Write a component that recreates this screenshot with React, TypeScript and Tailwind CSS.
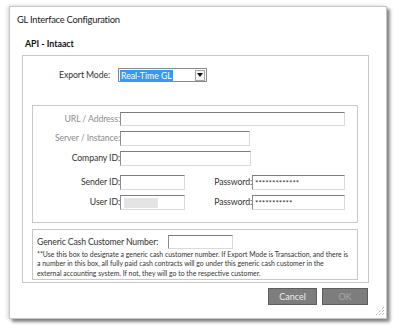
import type { ReactNode } from "react";

const font = { fontFamily: "Lato, 'Liberation Sans', sans-serif" };

function Field({ w, h = "h-[15px]", children }: { w: string; h?: string; children?: ReactNode }) {
  return (
    <div
      className={`${w} ${h} flex items-center border border-t-[#7c7c7c] border-l-[#8c8c8c] border-r-[#dadada] border-b-[#dadada] bg-white pl-[2px] text-[8px] leading-none text-[#333]`}
    >
      {children}
    </div>
  );
}

function Row({ label, muted, children, mt }: { label: string; muted?: boolean; children: ReactNode; mt: string }) {
  return (
    <div className={`flex items-center ${mt}`}>
      <div
        className={`w-[87px] whitespace-nowrap text-right text-[8.7px] leading-none tracking-[-0.1px] ${muted ? "text-[#8d8d8d]" : "text-[#333]"}`}
      >
        {label}
      </div>
      {children}
    </div>
  );
}

export default function App() {
  return (
    <div className="h-[331px] w-[399px] bg-white pl-[9px] pt-[6px]" style={font}>
      <div className="relative h-[313px] w-[378px] border border-[#c6c6c6] bg-white shadow-[3px_3px_3px_rgba(0,0,0,0.45),-1px_0_4px_rgba(0,0,0,0.2)]">
        <div className="h-[26px] pl-[7px] pt-[6px] text-[9.4px] leading-[14px] tracking-[-0.25px] text-[#222]">
          GL Interface Configuration
        </div>

        <div className="ml-[12px] w-[347px]">
          <div className="h-[22px] pl-[3px] pt-[5px] text-[8.8px] font-bold leading-[12px] text-[#111]">API - Intaact</div>

          <div className="h-[228px] border border-[#c8c8c8]">
            <div className="mt-[12px] flex items-center">
              <div className="w-[87px] text-right text-[8.7px] leading-none tracking-[-0.1px] text-[#333]">Export Mode:</div>
              <div className="ml-[8px] flex h-[14px] w-[89px] items-center border border-[#8a8a8a] bg-white pl-[1px]">
                <span className="bg-[#3399ff] px-[1px] text-[8.7px] leading-[11px] text-white">Real-Time GL</span>
                <div className="ml-auto mr-[1px] flex h-[11px] w-[10px] items-center justify-center border border-[#a6a6a6] bg-[#f4f4f4]">
                  <svg width="6" height="4" viewBox="0 0 6 4">
                    <path d="M0 0h6L3 4z" fill="#111" />
                  </svg>
                </div>
              </div>
            </div>

            <div className="ml-[9px] mt-[23px] h-[118px] w-[326px] border border-[#c8c8c8]">
              <Row label="URL / Address:" muted mt="mt-[6px]">
                <Field w="w-[225px]" h="h-[14px]" />
              </Row>
              <Row label="Server / Instance:" muted mt="mt-[5px]">
                <Field w="w-[130px]" />
              </Row>
              <Row label="Company ID:" mt="mt-[5px]">
                <Field w="w-[131px]" />
              </Row>
              <Row label="Sender ID:" mt="mt-[9px]">
                <Field w="w-[65px]" />
                <div className="w-[67px] text-right text-[8.7px] leading-none tracking-[-0.1px] text-[#333]">Password:</div>
                <Field w="w-[93px]">*************</Field>
              </Row>
              <Row label="User ID:" mt="mt-[5px]">
                <Field w="w-[65px]">
                  <div className="ml-[1px] h-[10px] w-[34px] bg-[#e4e4e4] blur-[0.5px]" />
                </Field>
                <div className="w-[67px] text-right text-[8.7px] leading-none tracking-[-0.1px] text-[#333]">Password:</div>
                <Field w="w-[93px]">***********</Field>
              </Row>
            </div>

            <div className="ml-[9px] mt-[6px] h-[51px] w-[326px] border border-[#c8c8c8] pl-[4px]">
              <div className="mt-[5px] flex items-center">
                <div className="w-[131px] whitespace-nowrap text-[8.7px] leading-none tracking-[-0.15px] text-[#333]">
                  Generic Cash Customer Number:
                </div>
                <Field w="w-[65px]" h="h-[14px]" />
              </div>
              <div className="mt-[1px] whitespace-nowrap text-[6.9px] leading-[9.3px] text-[#333]">
                <div>**Use this box to designate a generic cash customer number. If Export Mode is Transaction, and there is</div>
                <div>a number in this box, all fully paid cash contracts will go under this generic cash customer in the</div>
                <div>external accounting system. If not, they will go to the respective customer.</div>
              </div>
            </div>
          </div>

          <div className="mt-[5px] flex justify-end gap-[5px] pr-[1px]">
            <button className="h-[17px] w-[49px] border border-[#5e5e5e] bg-[#7d7d7d] text-[9px] leading-none text-[#eeeeee]">
              Cancel
            </button>
            <button className="h-[17px] w-[46px] border border-[#5e5e5e] bg-[#7d7d7d] text-[9px] leading-none text-[#a8a8a8]">
              OK
            </button>
          </div>
        </div>

        <svg className="absolute bottom-[2px] right-[1px]" width="10" height="10" viewBox="0 0 10 10">
          <path d="M9 1L1 9M9 4L4 9M9 7L7 9" stroke="#9a9a9a" strokeWidth="1" strokeDasharray="1 1" />
        </svg>
      </div>
    </div>
  );
}
